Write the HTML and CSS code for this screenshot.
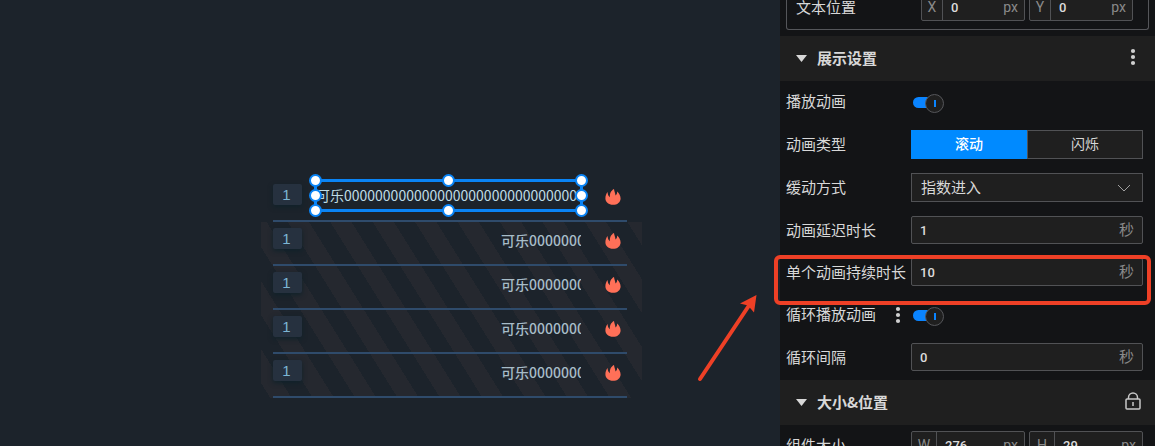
FILE: index.html
```
<!DOCTYPE html>
<html lang="zh-CN">
<head>
  <meta charset="UTF-8">
  <title>展示设置</title>
  <link rel="stylesheet" href="styles.css">
</head>
<body>
  <svg class="sprite" aria-hidden="true">
    <symbol id="fire" viewBox="0 0 16 16">
      <path d="M9 0 C9.200 2.200 10.200 3.800 10.500 6.400 C11.600 5.600 12.200 4.200 12.200 2.400 C14.200 4.200 15.600 6.600 15.600 9.400 C15.600 13.200 12.200 15.800 8 15.800 C3.800 15.800 0.400 13.200 0.400 9.300 C0.400 6.800 1.200 4.600 2.600 2.900 C2.700 5.200 3.400 7.200 5 8.200 C4.300 4.800 6.200 1.400 9 0 Z"/>
    </symbol>
    <symbol id="dots" viewBox="0 0 6 18">
      <circle cx="3" cy="3" r="2.1"/><circle cx="3" cy="9" r="2.1"/><circle cx="3" cy="15" r="2.1"/>
    </symbol>
    <symbol id="triangle" viewBox="0 0 11 7"><path d="M0 0 H11 L5.5 7 Z"/></symbol>
  </svg>

  <main class="stage">
    <div class="list">
      <div class="item active">
        <span class="badge">1</span>
        <span class="name">可乐000000000000000000000000000000</span>
        <svg class="fire"><use href="#fire"/></svg>
        <div class="selection">
          <i class="top start"></i><i class="top center"></i><i class="top end"></i>
          <i class="middle start"></i><i class="middle end"></i>
          <i class="bottom start"></i><i class="bottom center"></i><i class="bottom end"></i>
        </div>
      </div>
      <div class="striped">
        <div class="item">
          <span class="badge">1</span>
          <span class="name">可乐0000000</span>
          <svg class="fire"><use href="#fire"/></svg>
        </div>
        <div class="item">
          <span class="badge">1</span>
          <span class="name">可乐0000000</span>
          <svg class="fire"><use href="#fire"/></svg>
        </div>
        <div class="item">
          <span class="badge">1</span>
          <span class="name">可乐0000000</span>
          <svg class="fire"><use href="#fire"/></svg>
        </div>
        <div class="item">
          <span class="badge">1</span>
          <span class="name">可乐0000000</span>
          <svg class="fire"><use href="#fire"/></svg>
        </div>
      </div>
    </div>
  </main>

  <aside class="panel">
    <div class="group">
      <div class="row">
        <span class="label">文本位置</span>
        <div class="pair">
          <label class="field axis"><b>X</b><input type="text" value="0"><span>px</span></label>
          <label class="field axis"><b>Y</b><input type="text" value="0"><span>px</span></label>
        </div>
      </div>
    </div>

    <h3 class="head">
      <svg class="triangle"><use href="#triangle"/></svg>
      <span>展示设置</span>
      <button class="icon" aria-label="更多"><svg class="dots"><use href="#dots"/></svg></button>
    </h3>
    <div class="section">
      <div class="row tall">
        <label class="label" for="play">播放动画</label>
        <input class="switch" id="play" type="checkbox" checked>
      </div>
      <div class="row tall">
        <span class="label">动画类型</span>
        <div class="segment">
          <label><input type="radio" name="type" checked><span>滚动</span></label>
          <label><input type="radio" name="type"><span>闪烁</span></label>
        </div>
      </div>
      <div class="row tall">
        <label class="label" for="easing">缓动方式</label>
        <div class="select">
          <select id="easing"><option>指数进入</option></select>
          <svg class="chevron" viewBox="0 0 14 8"><path d="M1 1 L7 7 L13 1"/></svg>
        </div>
      </div>
      <div class="row">
        <label class="label" for="delay">动画延迟时长</label>
        <div class="field"><input id="delay" type="text" value="1"><span>秒</span></div>
      </div>
      <div class="row">
        <label class="label" for="duration">单个动画持续时长</label>
        <div class="field"><input id="duration" type="text" value="10"><span>秒</span></div>
        <div class="highlight">
          <svg class="arrow" viewBox="0 0 70 95">
            <path class="shaft" d="M10 89 L60 14"/>
            <path d="M66.500 5 L50 13.500 L58 15.500 L64 22.500 Z"/>
          </svg>
        </div>
      </div>
      <div class="row tall">
        <label class="label" for="loop">循环播放动画</label>
        <button class="icon more" aria-label="更多"><svg class="dots"><use href="#dots"/></svg></button>
        <input class="switch" id="loop" type="checkbox" checked>
      </div>
      <div class="row">
        <label class="label" for="interval">循环间隔</label>
        <div class="field"><input id="interval" type="text" value="0"><span>秒</span></div>
      </div>
    </div>

    <h3 class="head">
      <svg class="triangle"><use href="#triangle"/></svg>
      <span>大小&amp;位置</span>
      <button class="icon" aria-label="锁定">
        <svg class="lock" viewBox="0 0 16 18"><rect x="1" y="7" width="14" height="10" rx="1"/><path d="M3.500 7 V5.500 a4.500 4.500 0 0 1 9 0 V7 M8 10 V14"/></svg>
      </button>
    </h3>
    <div class="section">
      <div class="row">
        <span class="label">组件大小</span>
        <div class="pair">
          <label class="field axis wide"><b>W</b><input type="text" value="276"><span>px</span></label>
          <label class="field axis wide"><b>H</b><input type="text" value="29"><span>px</span></label>
        </div>
      </div>
    </div>
  </aside>
</body>
</html>
```
FILE: styles.css
```
* {
  box-sizing: border-box;
}
body {
  margin: 0;
  height: 100vh;
  display: flex;
  overflow: hidden;
  background: #1c232b;
  color: #d8d8d8;
  font: 15px/20px 'Noto Sans CJK SC', sans-serif;
}
.sprite {
  position: absolute;
  width: 0;
  height: 0;
}

/* canvas */
.stage {
  flex: 1;
  min-width: 0;
  padding: 178px 138px 0 261px;
}
.item {
  position: relative;
  display: flex;
  align-items: flex-start;
  height: 44px;
  padding-top: 6px;
  margin: 0 15px 0 12px;
  border-bottom: 2px solid #2f4b6b;
}
.badge {
  width: 29px;
  height: 21px;
  padding-right: 2px;
  border-radius: 2px;
  background: #26313f;
  box-shadow: 0 2px 5px #10222a;
  color: #7cb5d4;
  font: 15px/22px 'Liberation Sans', sans-serif;
  text-align: center;
}
.name {
  flex: 1;
  width: 0;
  height: 22px;
  margin: 1px 0 0 199px;
  overflow: hidden;
  white-space: nowrap;
  color: #a7bcc8;
  font-size: 14px;
  font-weight: 500;
  line-height: 22px;
}
.active .name {
  margin: 0 0 0 14px;
  color: #bfdde6;
  font-weight: 400;
}
.fire {
  width: 16px;
  height: 16px;
  margin: 5px 6px 0 24px;
  fill: #ff7058;
}
.striped {
  background: repeating-linear-gradient(58deg, transparent 0 8px, #25282f 8px 26px, transparent 26px 36px);
}
.selection {
  position: absolute;
  top: 1px;
  left: 41px;
  right: 44px;
  height: 33px;
  border: 3px solid #0a84f5;
}
.selection i {
  position: absolute;
  width: 13px;
  height: 13px;
  border: 2px solid #0a84f5;
  border-radius: 50%;
  background: #fff;
}
.selection .top { top: -8px; }
.selection .middle { top: 7px; }
.selection .bottom { bottom: -8px; }
.selection .start { left: -8px; }
.selection .center { left: calc(50% - 7px); }
.selection .end { right: -8px; }

/* settings panel */
.panel {
  width: 375px;
  background: #131416;
}
.group {
  margin: -7px 6px 6px;
  padding: 0 15px 8px 9px;
  border: 1px solid #55565a;
  border-top: 0;
  border-radius: 0 0 3px 3px;
}
.head {
  display: flex;
  align-items: center;
  height: 45px;
  margin: 0;
  padding: 0 12px 0 16px;
  background: #1f1f1f;
  font-size: 15px;
  font-weight: 700;
}
.head span {
  padding-bottom: 2px;
}
.triangle {
  width: 11px;
  height: 7px;
  margin-right: 10px;
  fill: #d8d8d8;
}
.icon {
  display: flex;
  align-items: center;
  justify-content: center;
  width: 20px;
  height: 20px;
  margin-left: auto;
  padding: 0;
  border: 0;
  background: none;
  cursor: pointer;
}
.head .icon {
  margin-bottom: 3px;
}
.dots {
  width: 6px;
  height: 18px;
  fill: #d0d0d0;
}
.lock {
  width: 16px;
  height: 18px;
  fill: none;
  stroke: #c8c8c8;
  stroke-width: 1.5;
}
.section {
  display: flex;
  flex-direction: column;
  gap: 14px;
  padding: 6px 12px 9px 6px;
}
.row {
  position: relative;
  display: flex;
  align-items: center;
  height: 28px;
}
.tall {
  height: 29px;
}
.label {
  width: 125px;
  flex: none;
  padding-bottom: 1px;
  white-space: nowrap;
}
.field {
  flex: 1;
  min-width: 0;
  display: flex;
  align-items: center;
  height: 28px;
  border: 1px solid #515255;
  border-radius: 2px;
  background: #1f1f1f;
}
.field input {
  flex: 1;
  width: 0;
  height: 100%;
  padding: 0 0 0 8px;
  border: 0;
  outline: 0;
  background: none;
  color: #dcdcdc;
  font: 500 13px Roboto, sans-serif;
}
.field span {
  padding: 0 8px 2px 0;
  color: #8a8a8a;
}
.pair {
  flex: 1;
  display: flex;
  gap: 4px;
}
.axis b {
  width: 21px;
  height: 100%;
  border-right: 1px solid #515255;
  color: #8a8a8a;
  font: 14px/26px Roboto, sans-serif;
  text-align: center;
}
.wide b {
  width: 25px;
}
.axis span {
  padding: 0 6px 0 0;
  font: 14px Roboto, sans-serif;
}
.switch {
  appearance: none;
  position: relative;
  width: 29px;
  height: 11px;
  margin: 1px 0 0 2px;
  border-radius: 6px;
  background: #0a84ff;
  cursor: pointer;
}
.switch::before {
  content: '';
  position: absolute;
  top: -3px;
  right: -2px;
  width: 17px;
  height: 17px;
  border: 1px solid #55565a;
  border-radius: 50%;
  background: linear-gradient(#0a84ff, #0a84ff) center / 2px 7px no-repeat #1f1f1f;
}
.more {
  width: 6px;
  margin: 0 10px 0 -16px;
}
.segment {
  flex: 1;
  display: flex;
  height: 29px;
}
.segment label {
  flex: 1;
  cursor: pointer;
}
.segment input {
  position: absolute;
  opacity: 0;
}
.segment span {
  display: block;
  height: 29px;
  border: 1px solid #515255;
  background: #1f1f1f;
  font-size: 14px;
  line-height: 25px;
  text-align: center;
}
.segment input:checked + span {
  border-color: #008aff;
  background: #008aff;
  color: #fff;
  font-weight: 500;
}
.select {
  position: relative;
  flex: 1;
}
.select select {
  display: block;
  appearance: none;
  width: 100%;
  height: 29px;
  padding: 0 9px 2px;
  border: 1px solid #515255;
  border-radius: 0;
  background: #1f1f1f;
  color: #d8d8d8;
  font: inherit;
}
.chevron {
  position: absolute;
  top: 11px;
  right: 12px;
  width: 14px;
  height: 8px;
  fill: none;
  stroke: #a0a0a0;
  pointer-events: none;
}

/* annotation */
.highlight {
  position: absolute;
  top: -3px;
  right: -8px;
  bottom: -19px;
  left: -12px;
  border: 4px solid #ee4026;
  border-radius: 6px;
  pointer-events: none;
}
.arrow {
  position: absolute;
  top: 31px;
  left: -88px;
  width: 70px;
  height: 95px;
  fill: #ee4026;
}
.shaft {
  stroke: #ee4026;
  stroke-width: 4;
  stroke-linecap: round;
}
```
